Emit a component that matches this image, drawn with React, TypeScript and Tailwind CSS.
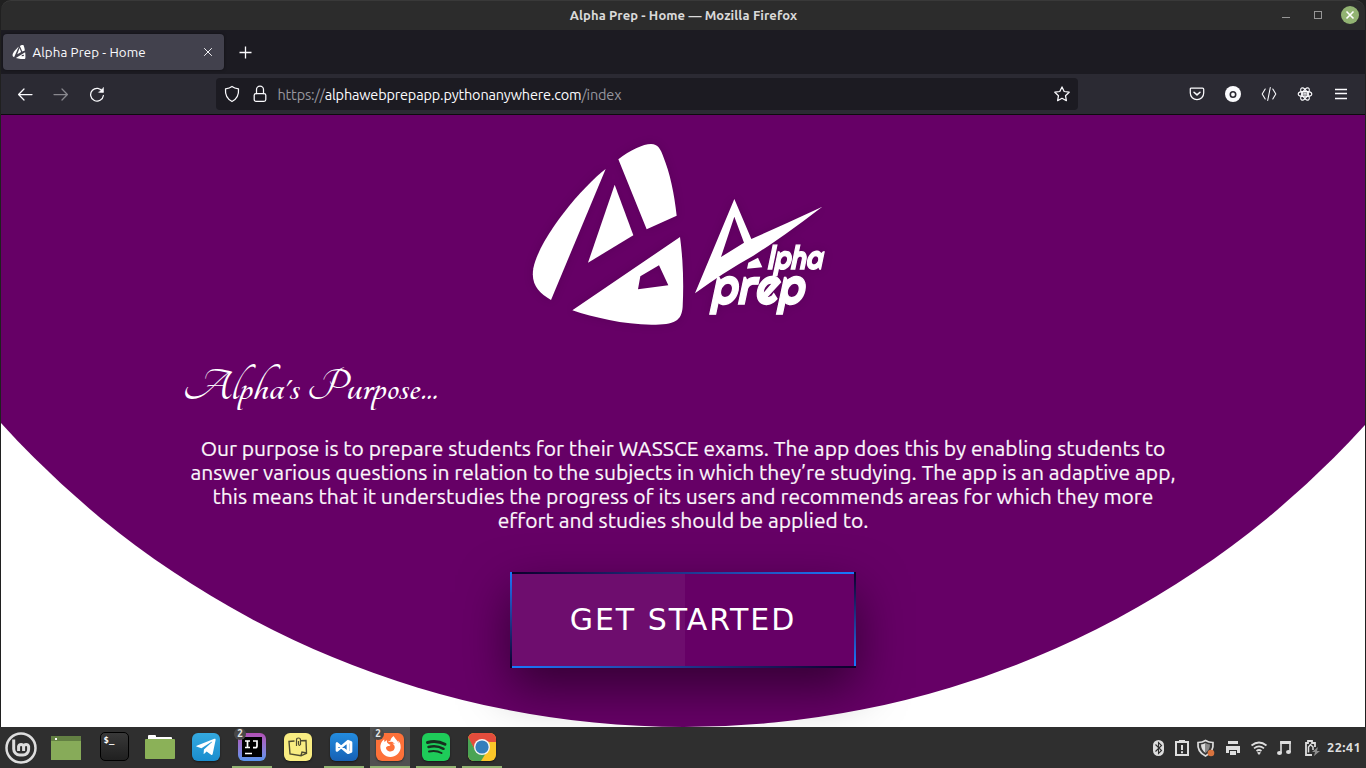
import React from "react";
import { SiFirefoxbrowser } from "react-icons/si";
import { FaTelegramPlane } from "react-icons/fa";

const UI = "font-['Ubuntu','Noto_Sans',sans-serif]";

function TitleBar() {
  return (
    <div className="relative flex h-[30px] items-center justify-center rounded-t-[10px] border-t border-[#393939] bg-[#2c2c2c]">
      <span className="pl-[1px] text-[13px] font-semibold tracking-[0.1px] text-[#dadada]">Alpha Prep - Home — Mozilla Firefox</span>
      <div className="absolute top-0 right-[6px] flex h-[28px] items-center">
        <svg width="79" height="20" viewBox="0 0 79 20">
          <path d="M2 12.5h8" stroke="#969696" />
          <rect x="34.5" y="6.5" width="7" height="7" fill="none" stroke="#969696" />
          <circle cx="70" cy="10" r="9" fill="#92b372" />
          <path d="M66.5 6.5l7 7m0-7l-7 7" stroke="#fff" strokeWidth="1.6" />
        </svg>
      </div>
    </div>
  );
}

function MarkShapes() {
  return (
    <>
      <path d="M257 117C190 168 60 318 40 415C32 462 55 488 93 510Z" />
      <path d="M284 164L340 316L204 398Z" />
      <path d="M295 88C330 60 370 42 393 42C414 42 422 58 430 80C450 130 463 190 470 257L380 298Z" />
      <path fillRule="evenodd" d="M480 321C488 380 492 450 488 530C485 572 465 584 395 584C310 584 220 562 157 541ZM417 406L361 439L354 478L445 466Z" />
    </>
  );
}

function TabBar() {
  return (
    <div className="flex h-[44px] items-center bg-[#1c1b22] pl-[2px]">
      <div className="flex h-[36px] w-[221px] items-center rounded-[4px] bg-[#42414d] pl-[9px] shadow-[0_0_3px_rgba(0,0,0,0.5)]">
        <svg width="14" height="14" viewBox="20 50 490 530" preserveAspectRatio="none" fill="#fff"><MarkShapes /></svg>
        <span className="ml-[6.500px] w-[160.500px] pt-[1px] text-[13.33px] tracking-[0.1px] text-[#fbfbfe]">Alpha Prep - Home</span>
        <svg className="ml-[10px]" width="10" height="10" viewBox="0 0 10 10"><path d="M1.2 1.2l7.6 7.6m0-7.6L1.2 8.8" stroke="#f2f2f5" /></svg>
      </div>
      <svg className="mt-[1px] ml-[15px]" width="13" height="13" viewBox="0 0 13 13"><path d="M6.500 .5v12M.5 6.500h12" stroke="#fbfbfe" strokeWidth="1.3" /></svg>
    </div>
  );
}

const stroke = { fill: "none", stroke: "#fbfbfe", strokeWidth: 1.25, strokeLinecap: "round", strokeLinejoin: "round" } as const;

function ToolBar() {
  return (
    <div className="flex h-[41px] items-center border-b border-[#0c0c0d] bg-[#2b2a33] pl-[16px] pr-[16px]">
      <div className="flex w-[199px] items-center gap-[20px]">
        <svg width="16" height="16" viewBox="0 0 16 16" {...stroke}><path d="M15 8.5H2M7 3L1.6 8.5L7 14" /></svg>
        <svg width="16" height="16" viewBox="0 0 16 16" {...stroke} opacity=".45"><path d="M1 8.5h13M9 3l5.400 5.500L9 14" /></svg>
        <svg width="16" height="16" viewBox="0 0 16 16" {...stroke}><path d="M13.700 5.700A6.400 6.400 0 1 0 14.400 9.500" /><path d="M9.800 6.400h4.700V1.700z" fill="#fbfbfe" strokeWidth=".5" /></svg>
      </div>
      <div className="flex h-[32px] w-[862px] items-center rounded-[4px] bg-[#1c1b22] px-[8px]">
        <svg width="16" height="18" viewBox="0 0 16 18" {...stroke}><path d="M8 1.500C6 3 4 3.500 1.500 3.900C1 10 3 14 8 16.500C13 14 15 10 14.500 3.900C12 3.500 10 3 8 1.500Z" /></svg>
        <svg className="ml-[12px]" width="16" height="18" viewBox="0 0 16 18" {...stroke}><rect x="2.200" y="8.500" width="11.600" height="7.800" rx="1.800" /><path d="M4.500 8.500V4.700a3.500 3.500 0 0 1 7 0v3.800" /></svg>
        <span className="ml-[9.500px] flex-1 pt-[2px] text-[14.5px] tracking-[-0.18px] whitespace-nowrap text-[#97969e]">
          https://<span className="text-[#fbfbfe]">alphawebprepapp.pythonanywhere.com</span>/index
        </span>
        <svg width="16" height="16" viewBox="0 0 16 16" {...stroke}><path d="M8 .9l2.200 4.600 5 .7-3.700 3.500.9 5L8 12.300l-4.400 2.400.9-5L.8 6.200l5-.7z" /></svg>
      </div>
      <div className="ml-auto flex items-center gap-[20px]">
        <svg width="16" height="16" viewBox="0 0 16 16" {...stroke}><path d="M2.500 2h11q1.200 0 1.200 1.200V7a6.700 6.700 0 0 1-13.400 0V3.200Q1.300 2 2.500 2z" /><path d="M5 6.200L8 8.900l3-2.700" strokeWidth="1.500" /></svg>
        <svg width="16" height="16" viewBox="0 0 16 16"><circle cx="8" cy="8" r="8" fill="#fbfbfe" /><circle cx="8" cy="8.500" r="2.700" fill="none" stroke="#2b2a33" strokeWidth="1.600" /></svg>
        <svg width="16" height="16" viewBox="0 0 16 16" {...stroke} strokeWidth="1.100"><path d="M4.200 3L1.200 8l3 5M11.800 3l3 5-3 5M9.300 1.500L6.700 14.500" /></svg>
        <svg width="16" height="16" viewBox="0 0 16 16" {...stroke} strokeWidth="1.150"><ellipse cx="8" cy="8" rx="6.800" ry="2.700" /><ellipse cx="8" cy="8" rx="6.800" ry="2.700" transform="rotate(60 8 8)" /><ellipse cx="8" cy="8" rx="6.800" ry="2.700" transform="rotate(120 8 8)" /><circle cx="8" cy="8" r="1.200" /></svg>
        <svg width="16" height="16" viewBox="0 0 16 16"><path d="M2 3.500h12M2 7.500h12M2 12.500h12" stroke="#fbfbfe" strokeWidth="1.300" /></svg>
      </div>
    </div>
  );
}

function Logo() {
  return (
    <svg className="overflow-visible drop-shadow-[0_0_5px_rgba(0,0,0,0.12)]" width="320" height="210" viewBox="0 0 960 630" fill="#fff">
      <MarkShapes />
      <path fillRule="evenodd" d="M643 207L694 327Q800 280 907 230Q790 320 700 377Q610 427 525 490ZM643 260L603 381L672 338Z" />
      <path d="M714 383L727 412L681 416L685 398Z" />
      <g className="font-['Righteous','Liberation_Sans',sans-serif] italic" stroke="#fff" strokeWidth="4">
        <text x="740" y="418" fontSize="98" textLength="166" lengthAdjust="spacingAndGlyphs">lpha</text>
        <text x="569" y="523" fontSize="153" textLength="280" lengthAdjust="spacingAndGlyphs">prep</text>
      </g>
    </svg>
  );
}

function Page() {
  return (
    <main className="relative flex h-[612px] flex-col items-center overflow-hidden bg-white">
      <svg className="absolute top-0 left-0" width="1364" height="612" viewBox="0 0 1364 612"><circle cx="683" cy="-307" r="919" fill="#660066" /></svg>
      <div className="relative mt-[15px] mr-[6px] h-[210px] w-[320px]"><Logo /></div>
      <h1 className="relative mt-[17px] h-[68px] w-[994px] pr-[3px] font-['Tangerine','Liberation_Serif',serif] text-[48px] leading-[60px] font-bold whitespace-nowrap text-white"><span className="-ml-[3px]">Alpha's Purpose...</span></h1>
      <div className="relative mt-[11px] flex w-[994px] flex-col items-center text-[21px] leading-[24px] tracking-[0.02px] whitespace-nowrap text-[#fbf7fb] [-webkit-text-stroke:0.2px_#fbf7fb]">
        <span>Our purpose is to prepare students for their WASSCE exams. The app does this by enabling students to</span>
        <span>answer various questions in relation to the subjects in which they’re studying. The app is an adaptive app,</span>
        <span>this means that it understudies the progress of its users and recommends areas for which they more</span>
        <span>effort and studies should be applied to.</span>
      </div>
      <button className="relative mt-[40px] flex h-[96px] w-[346px] items-center justify-center bg-[#660066] pb-[2px] font-['DejaVu_Sans',sans-serif] text-[30px] tracking-[2px] text-white shadow-[0_20px_50px_rgba(0,0,0,0.5)]">
        <i className="absolute top-[2px] left-[2px] h-[92px] w-[173px] bg-white/5" />
        <i className="absolute top-0 left-[2px] h-[2px] w-[342px] bg-linear-to-r from-[#0c002b] to-[#1779ff]" />
        <i className="absolute top-0 right-0 h-[94px] w-[2px] bg-linear-to-b from-[#0c002b] to-[#1779ff]" />
        <i className="absolute bottom-0 left-[2px] h-[2px] w-[344px] bg-linear-to-l from-[#0c002b] to-[#1779ff]" />
        <i className="absolute top-0 left-0 h-[96px] w-[2px] bg-linear-to-t from-[#0c002b] to-[#1779ff]" />
        <span className="relative whitespace-nowrap">GET STARTED</span>
      </button>
    </main>
  );
}

function Slot({ children, active, open, badge }: { children: React.ReactNode; active?: boolean; open?: boolean; badge?: boolean }) {
  return (
    <div className={`relative flex h-[41px] w-[40px] shrink-0 flex-col ${active ? "bg-[#505050]" : ""}`}>
      <div className="flex h-[39px] items-center justify-center">{children}</div>
      {open && <div className="h-[2px] bg-[#92b372]" />}
      {badge && <span className="absolute top-[1px] left-[2px] flex h-[12px] w-[12px] items-center justify-center rounded-full bg-[#484848] text-[10px] leading-none font-semibold text-[#e8e8e8]">2</span>}
    </div>
  );
}

function Taskbar() {
  const tile = "flex h-[28px] w-[28px] items-center justify-center rounded-[6px] shadow-[0_1px_2px_rgba(0,0,0,0.5)]";
  return (
    <footer className="flex h-[41px] items-center bg-[#2f2f2f]">
      <div className="flex gap-[6px] pl-[1px]">
        <Slot>
          <svg className="mt-[2px]" width="32" height="32" viewBox="0 0 32 32" fill="none" stroke="#dedede" strokeWidth="2.500" strokeLinecap="butt">
            <circle cx="16" cy="16" r="14.500" />
            <path d="M8.700 7.500v9.500a6 6 0 0 0 6 6h3.400a5.500 5.500 0 0 0 5.500-5.500v-3.200a2.600 2.600 0 0 0-5 0v4.700m0-4.700a2.600 2.600 0 0 0-5 0v4.700" strokeWidth="3" />
          </svg>
        </Slot>
        <Slot><svg className="mr-[2px] mt-[2px]" width="30" height="24" viewBox="0 0 30 24"><path fill="#87ab59" d="M0 0h30v24H0z" /><path fill="#638043" d="M0 0h30v5H0z" /><rect x="4" y="2" width="2" height="2" fill="#fff" /></svg></Slot>
        <Slot><div className="ml-[2px] flex h-[29px] w-[29px] items-start rounded-[5px] border border-black bg-linear-to-b from-[#393939] to-[#202020] pt-[3px] pl-[3px] font-['DejaVu_Sans_Mono',monospace] text-[9px] leading-[9px] font-bold text-white">$_</div></Slot>
        <Slot><svg className="ml-[2px]" width="30" height="25" viewBox="0 0 30 25"><path d="M3 7V2q0-1 1-1h6q1 0 1 1v1h15q1 0 1 1v4z" fill="#fff" /><rect y="5" width="30" height="20" rx="1" fill="#8bb158" /></svg></Slot>
        <Slot><div className={`${tile} ml-[2px] bg-linear-to-b from-[#34a9df] to-[#1a8dce]`}><FaTelegramPlane className="-ml-[1px] h-[22px] w-[22px] text-white" /></div></Slot>
        <div className="ml-[1px] flex gap-[6px]">
          <Slot open badge>
            <div className="flex h-[28px] w-[28px] items-center justify-center rounded-[6px] bg-linear-to-b from-[#b14fb5] to-[#5595ee]"><svg width="20" height="20" viewBox="0 0 20 20"><path d="M0 0h20v20H0z" /><path d="M3 4h5M5.500 4v6.500M3 10.500h5M11 4h4v5q0 1.700-2 1.700h-2M3 16.500h7" stroke="#fff" strokeWidth="1.700" fill="none" /></svg></div>
          </Slot>
          <Slot><div className={`${tile} bg-[#f9ed82]`}><svg width="20" height="20" viewBox="0 0 20 20" fill="none" stroke="#4f4c30" strokeWidth="1.400"><path d="M6.500 4L1 4.500l1 12.500 11 1.800 5.500-2.500L18 3.500 12 3.700M13 18.500l1-3.500 4.500 1" /><path d="M8.500 9V3q0-2 2-2t2 2v4.500q-1.500 2-2-.5V4" strokeWidth="1.200" /></svg></div></Slot>
          <Slot open><div className={`${tile} bg-linear-to-b from-[#238cdf] to-[#1761b5]`}><svg width="18" height="16" viewBox="0 0 18 16" fill="none" stroke="#fff" strokeWidth="2.700" strokeLinejoin="round"><path d="M2 4.500v7l11-9.200v11.400zM13 2.300l3 1.300v8.800l-3 1.300" /></svg></div></Slot>
          <Slot open active badge><div className={`${tile} bg-[#fd7139]`}><SiFirefoxbrowser className="h-[21px] w-[21px] text-white" /></div></Slot>
          <Slot open><div className={`${tile} overflow-hidden bg-[#1ecc59]`}><svg width="28" height="28" viewBox="0 0 28 28" fill="none" stroke="#18301f" strokeLinecap="round"><path d="M5.500 9.500q9-2.800 17.500 1.800" strokeWidth="3" /><path d="M6.500 14q8-2.200 15 1.800" strokeWidth="2.500" /><path d="M7 18.500q7-1.600 12.500 1.500" strokeWidth="2" /></svg></div></Slot>
          <Slot open><div className={`${tile} overflow-hidden`}><svg width="28" height="28" viewBox="0 0 28 28"><path d="M0 0h28v28H0z" fill="#fbc629" /><path d="M0 0h28v9H14L7 17 0 5z" fill="#e34c3c" /><path d="M0 4l7 13 11 3-5 8H0z" fill="#4aa454" /><circle cx="14" cy="14" r="8" fill="#f4f4f4" /><circle cx="14" cy="14" r="6.600" fill="#347fbc" /></svg></div></Slot>
        </div>
      </div>
      <div className="ml-auto flex items-center pt-[1px] pr-[3px]">
        <svg className="mr-px" width="175" height="20" viewBox="0 0 175 20">
          <rect x="2" y="2" width="11" height="16" rx="5.500" fill="#dedede" />
          <path d="M4.500 6.500l6 6-3 3v-11l3 3-6 6" fill="none" stroke="#2f2f2f" strokeWidth="1.100" />
          <path d="M25 4h12v13H25z" fill="none" stroke="#dedede" strokeWidth="2" /><path d="M28 2h6v3h-6z" fill="#dedede" /><path d="M31 7v5m0 1.300v2" stroke="#dedede" strokeWidth="2" />
          <path d="M54.500 2.500q-3 2-7.500 2Q46 14 54.500 18q8.500-4 7.500-13.500-4.500 0-7.500-2z" fill="#393939" stroke="#dedede" strokeWidth="1.700" /><path d="M54.500 5q-2 1-4.500 1.500Q50 12 54.500 15z" fill="#dedede" /><path d="M54.500 5q2 1 4.500 1.500Q59 12 54.500 15z" fill="#888" /><circle cx="60" cy="15" r="3.300" fill="#d9733e" />
          <path d="M77 3h10v3H77zM75 8h14v7h-3v-3H78v3h-3zM79 13h6v4h-6z" fill="#dedede" />
          <g fill="none" stroke="#dedede" strokeWidth="1.700"><path d="M100.500 7.500q7.500-6 15 0M103 10.300q5-4 10 0M105.500 13q2.500-2 5 0" /></g><path d="M108 17l-2-2.500q2-1.200 4 0z" fill="#dedede" />
          <path d="M130 15V4h9v10" fill="none" stroke="#dedede" strokeWidth="1.600" /><path d="M129.200 3h10.600v3h-10.600z" fill="#dedede" /><ellipse cx="128.500" cy="15" rx="2.500" ry="2" fill="#dedede" /><ellipse cx="137.500" cy="14" rx="2.500" ry="2" fill="#dedede" />
          <path d="M161 17h-6V5h2V3h4v2h3v4" fill="none" stroke="#dedede" strokeWidth="1.800" /><path d="M157.500 14.500V9l2-2.500L162 9v3" fill="none" stroke="#dedede" strokeWidth="1.500" /><path d="M167 9l-6 5h3l-1 4 6-5h-3z" fill="#8e8e8e" />
        </svg>
        <span className="w-[36px] text-[13px] font-bold tracking-[0.3px] whitespace-nowrap text-[#dedede]">22:41</span>
      </div>
    </footer>
  );
}

export default function App() {
  return (
    <div className={`h-[768px] w-[1366px] overflow-hidden bg-[#202020] ${UI}`}>
      <div className="px-px">
        <TitleBar />
        <TabBar />
        <ToolBar />
        <Page />
      </div>
      <Taskbar />
    </div>
  );
}
